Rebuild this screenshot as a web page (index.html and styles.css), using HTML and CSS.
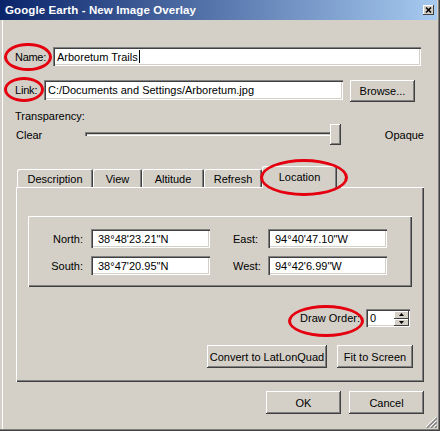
FILE: index.html
```html
<!DOCTYPE html>
<html>
<head>
<meta charset="utf-8">
<link rel="stylesheet" href="styles.css">
</head>
<body>
<div class="window">
  <div class="titlebar">
    <span class="title">Google Earth - New Image Overlay</span>
    <span class="close"><svg width="11" height="10" viewBox="0 0 11 10"><path d="M3 2.5 L8 7.5 M8 2.5 L3 7.5" stroke="#000" stroke-width="1.6"/></svg></span>
  </div>
  <div class="content">
    <div class="row row-name">
      <span class="lbl lbl-name">Name:</span>
      <div class="field field-name">Arboretum Trails<span class="caret"></span></div>
    </div>
    <div class="row row-link">
      <span class="lbl lbl-link">Link:</span>
      <div class="field field-link">C:/Documents and Settings/Arboretum.jpg</div>
      <div class="btn btn-browse">Browse...</div>
    </div>
    <div class="trans-label">Transparency:</div>
    <div class="slider-row">
      <span class="clear">Clear</span>
      <div class="slider"><div class="thumb"></div></div>
      <span class="opaque">Opaque</span>
    </div>
    <div class="tabs">
      <div class="tab t-desc">Description</div>
      <div class="tab t-view">View</div>
      <div class="tab t-alt">Altitude</div>
      <div class="tab t-ref">Refresh</div>
      <div class="tab t-loc active">Location</div>
    </div>
    <div class="panel">
      <div class="group">
        <span class="glbl glbl-l">North:</span>
        <div class="field gfield">38°48'23.21"N</div>
        <span class="glbl glbl-r">East:</span>
        <div class="field gfield">94°40'47.10"W</div>
        <span class="glbl glbl-l">South:</span>
        <div class="field gfield">38°47'20.95"N</div>
        <span class="glbl glbl-r">West:</span>
        <div class="field gfield">94°42'6.99"W</div>
      </div>
      <div class="draw-row">
        <span class="draw-lbl">Draw Order:</span>
        <div class="spinner">
          <div class="spin-val">0</div>
          <div class="spin-btns">
            <div class="spin-btn"><svg width="5" height="3" viewBox="0 0 5 3"><path d="M2.5 0 L5 3 L0 3Z" fill="#000"/></svg></div>
            <div class="spin-btn"><svg width="5" height="3" viewBox="0 0 5 3"><path d="M0 0 L5 0 L2.5 3Z" fill="#000"/></svg></div>
          </div>
        </div>
      </div>
      <div class="panel-buttons">
        <div class="btn btn-convert">Convert to LatLonQuad</div>
        <div class="btn btn-fit">Fit to Screen</div>
      </div>
    </div>
    <div class="dialog-buttons">
      <div class="btn btn-dlg">OK</div>
      <div class="btn btn-dlg">Cancel</div>
    </div>
  </div>
  <div class="ring ring-name"></div>
  <div class="ring ring-link"></div>
  <div class="ring ring-loc"></div>
  <div class="ring ring-draw"></div>
  <svg class="grip" width="12" height="12" viewBox="0 0 12 12">
    <path d="M11 1 L1 11 M11 5 L5 11 M11 9 L9 11" stroke="#fff" stroke-width="1"/>
    <path d="M12 2 L2 12 M12 6 L6 12 M12 10 L10 12" stroke="#808080" stroke-width="1.4"/>
  </svg>
</div>
</body>
</html>
```
FILE: styles.css
```css
* { box-sizing: border-box; }
html, body { margin: 0; padding: 0; }
body {
  font-family: "Liberation Sans", Tahoma, Arial, sans-serif;
  font-size: 11px;
  color: #000;
  background: #d4d0c8;
}
.window {
  position: relative;
  width: 440px;
  height: 431px;
  background: #d4d0c8;
  box-shadow: inset -1px -1px 0 #404040, inset -2px -2px 0 #808080, inset 2px 0 0 #d4d0c8, inset 3px 0 0 #fff;
  overflow: hidden;
}
.titlebar {
  width: 437px;
  height: 20px;
  background: linear-gradient(to right, #0a246a, #a6caf0);
  display: flex;
  align-items: center;
  justify-content: space-between;
  padding: 0 3px 0 5px;
}
.title {
  color: #fff;
  font-weight: bold;
  font-size: 11.5px;
  letter-spacing: 0.1px;
}
.close {
  width: 11px;
  height: 10px;
  display: flex;
  background: #d4d0c8;
  box-shadow: inset -1px -1px 0 #404040, inset 1px 1px 0 #fff;
}
.content {
  margin-left: 15px;
  width: 409px;
}
.row { display: flex; align-items: center; }
.row-name { margin-top: 27px; height: 19px; }
.row-link { margin-top: 14px; height: 22px; align-items: flex-start; }
.lbl-name { width: 38px; letter-spacing: -0.3px; }
.lbl-link { width: 29px; line-height: 20px; letter-spacing: -0.2px; }
.field {
  background: #fff;
  box-shadow: inset 1px 1px 0 #808080, inset 2px 2px 0 #404040, inset -1px -1px 0 #fff, inset -2px -2px 0 #d4d0c8;
  display: flex;
  align-items: center;
  padding-left: 4px;
  white-space: nowrap;
}
.field-name { width: 368px; height: 19px; }
.caret { display: inline-block; width: 1px; height: 13px; background: #000; margin-left: 1px; }
.field-link { width: 299px; height: 20px; }
.btn {
  background: #d4d0c8;
  box-shadow: inset -1px -1px 0 #404040, inset 1px 1px 0 #fff, inset -2px -2px 0 #808080, inset 2px 2px 0 #d4d0c8;
  display: flex;
  align-items: center;
  justify-content: center;
  white-space: nowrap;
}
.btn-browse { width: 65px; height: 22px; margin-left: 7px; }
.trans-label { margin-top: 8px; height: 13px; line-height: 13px; }
.slider-row { display: flex; align-items: center; height: 21px; margin-top: 1px; }
.clear { width: 70px; padding-left: 1px; }
.slider {
  position: relative;
  width: 258px;
  height: 21px;
  display: flex;
  justify-content: flex-end;
}
.slider::before {
  content: "";
  position: absolute;
  left: 0; right: 0; top: 8px; height: 4px;
  box-shadow: inset 1px 1px 0 #808080, inset 2px 2px 0 #404040, inset -1px -1px 0 #fff, inset -2px -2px 0 #d4d0c8;
}
.thumb {
  position: relative;
  width: 11px;
  height: 21px;
  background: #d4d0c8;
  box-shadow: inset -1px -1px 0 #404040, inset 1px 1px 0 #fff, inset -2px -2px 0 #808080;
}
.opaque { margin-left: 44px; }
.tabs {
  display: flex;
  align-items: flex-end;
  margin-top: 21px;
  margin-left: 2px;
  height: 21px;
  position: relative;
  z-index: 1;
}
.tab {
  height: 18px;
  display: flex;
  align-items: center;
  justify-content: center;
  border-top-left-radius: 2px;
  border-top-right-radius: 2px;
  box-shadow: inset 1px 1px 0 #fff, inset -1px 0 0 #404040, inset -2px 0 0 #808080;
  background: #d4d0c8;
  padding-top: 1px;
}
.t-desc { width: 76px; }
.t-view { width: 49px; }
.t-alt { width: 62px; }
.t-ref { width: 58px; }
.t-loc { width: 75px; }
.tab.active { height: 22px; margin-bottom: -1px; padding-top: 0; }
.panel {
  margin-left: 1px;
  width: 408px;
  height: 195px;
  padding: 29px 12px 0 12px;
  box-shadow: inset 1px 1px 0 #fff, inset -1px -1px 0 #404040, inset -2px -2px 0 #808080;
}
.group {
  width: 384px;
  height: 71px;
  padding-top: 13px;
  display: grid;
  grid-template-columns: 63px 119px 58px 119px;
  grid-auto-rows: 19px;
  row-gap: 8px;
  align-items: center;
  box-shadow: inset 1px 1px 0 #fff, inset -1px -1px 0 #404040, inset -2px -2px 0 #808080;
}
.glbl-l { text-align: right; padding-right: 8px; }
.glbl-r { padding-left: 23px; }
.gfield { height: 19px; padding-left: 7px; }
.draw-row {
  display: flex;
  justify-content: flex-end;
  align-items: center;
  margin-top: 22px;
  height: 18px;
  padding-right: 2px;
}
.draw-lbl { margin-right: 6px; }
.spinner {
  width: 44px;
  height: 18px;
  display: flex;
  background: #fff;
  padding: 2px 1px 1px 2px;
  box-shadow: inset 1px 1px 0 #808080, inset 2px 2px 0 #404040, inset -1px -1px 0 #fff, inset -2px -2px 0 #d4d0c8;
}
.spin-val { flex: 1; padding-left: 2px; line-height: 14px; }
.spin-btns { width: 15px; display: flex; flex-direction: column; }
.spin-btn {
  flex: 1;
  display: flex;
  align-items: center;
  justify-content: center;
  background: #d4d0c8;
  box-shadow: inset -1px -1px 0 #404040, inset 1px 1px 0 #fff;
}
.panel-buttons {
  display: flex;
  justify-content: flex-end;
  margin-top: 18px;
  margin-right: -1px;
  gap: 10px;
}
.btn-convert { width: 120px; height: 23px; }
.btn-fit { width: 76px; height: 23px; }
.dialog-buttons {
  display: flex;
  justify-content: flex-end;
  gap: 8px;
  margin-top: 9px;
}
.btn-dlg { width: 75px; height: 23px; }
.ring {
  position: absolute;
  border: 3px solid #e4000f;
  border-radius: 50%;
  z-index: 2;
}
.ring-name { left: 4px; top: 43px; width: 48px; height: 28px; }
.ring-link { left: 4px; top: 77px; width: 40px; height: 25px; }
.ring-loc { left: 260px; top: 159px; width: 88px; height: 37px; }
.ring-draw { left: 288px; top: 305px; width: 76px; height: 32px; }
.grip { position: absolute; right: 3px; bottom: 3px; }
```
